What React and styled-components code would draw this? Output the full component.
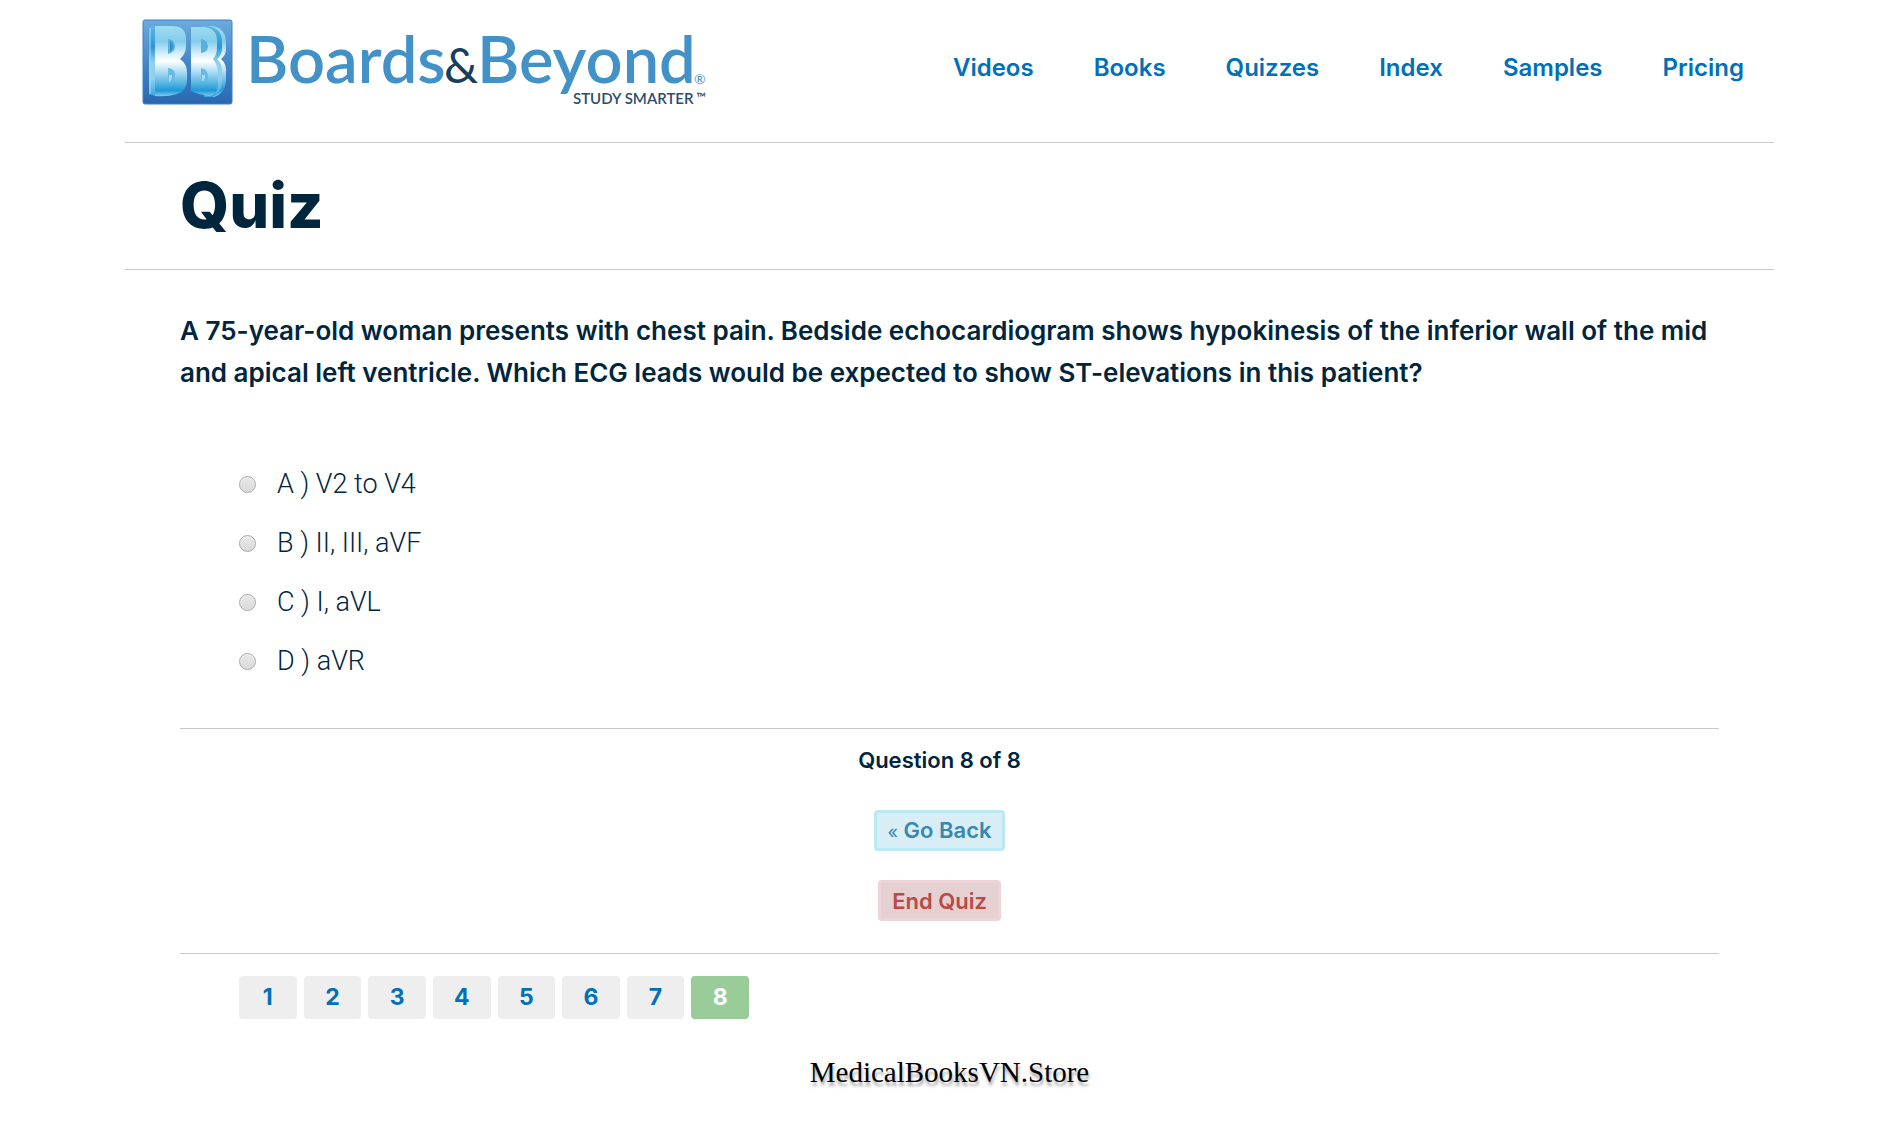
import React, { useState } from "react";
import styled, { createGlobalStyle } from "styled-components";

const navy = "#00263e";
const blue = "#0070b8";
const rule = "#c8c8c8";

const GlobalStyle = createGlobalStyle`
  *, *::before, *::after { box-sizing: border-box; }
  body {
    margin: 0;
    background: #fff;
    color: ${navy};
    font-family: Inter, "Liberation Sans", sans-serif;
  }
`;

const Page = styled.div`
  padding: 0 125px;
`;

const Header = styled.header`
  display: flex;
  justify-content: space-between;
  align-items: flex-start;
  height: 143px;
  padding: 14px 30px 0 13px;
  border-bottom: 1px solid ${rule};
`;

const LogoLink = styled.a`
  display: block;
  svg { display: block; }
`;

const Nav = styled.nav`
  display: flex;
  gap: 60px;
  padding-top: 36px;
`;

const NavLink = styled.a`
  color: ${blue};
  font-size: 24px;
  font-weight: 600;
  line-height: 36px;
  text-decoration: none;
`;

const TitleBar = styled.div`
  padding: 22px 55px 24px;
  border-bottom: 1px solid ${rule};
`;

const Title = styled.h1`
  margin: 0;
  font-size: 63px;
  font-weight: 800;
  line-height: 80px;
`;

const Content = styled.main`
  padding: 40px 55px 0;
`;

const Options = styled.fieldset`
  margin: 0;
  padding: 0 0 38px;
  border: 0;
  min-width: 0;
`;

const Question = styled.legend`
  padding: 0 0 60px;
  font-size: 26px;
  font-weight: 600;
  line-height: 42px;
`;

const Option = styled.label`
  display: flex;
  align-items: center;
  gap: 21px;
  height: 59px;
  padding-left: 59px;
  font: 350 27px Roboto, "Liberation Sans", sans-serif;
`;

const Radio = styled.input`
  appearance: none;
  width: 17px;
  height: 17px;
  margin: 2px 0 0;
  border: 1px solid #a9a9a9;
  border-radius: 50%;
  background: linear-gradient(#e8e8e8, #dadada);
  box-shadow: inset 0 1px 1px #f4f4f4;
  &:checked {
    background: radial-gradient(circle, #444 0 4px, #e0e0e0 5px);
  }
`;

const Actions = styled.section`
  display: flex;
  flex-direction: column;
  align-items: center;
  padding: 15px 20px 32px 0;
  border-top: 1px solid ${rule};
  border-bottom: 1px solid ${rule};
`;

const Progress = styled.p`
  margin: 0 0 34px;
  font-size: 22px;
  font-weight: 600;
  line-height: 32px;
`;

const tones = {
  info: ["#3a87ad", "#d9edf7", "#bce8f1"],
  danger: ["#b94a48", "#e6d1d2", "#eed3d7"],
};

const ActionButton = styled.button`
  height: 41px;
  padding: 0 11px;
  color: ${(p) => tones[p.$tone][0]};
  background: ${(p) => tones[p.$tone][1]};
  border: 3px solid ${(p) => tones[p.$tone][2]};
  border-radius: 4px;
  font: 600 22px/34px Inter, "Liberation Sans", sans-serif;
  cursor: pointer;
  & + & { margin-top: 29px; }
`;

const Chevron = styled.span`
  font-size: 18px;
  font-weight: 400;
`;

const Pagination = styled.nav`
  display: grid;
  grid-template-columns: repeat(8, 1fr);
  gap: 7px;
  width: 510px;
  margin: 22px 0 0 59px;
`;

const PageLink = styled.a`
  border-radius: 4px;
  background: ${(p) => (p.$current ? "#99cc99" : "#eeeeee")};
  color: ${(p) => (p.$current ? "#fff" : blue)};
  font-size: 23px;
  font-weight: 700;
  line-height: 43px;
  text-align: center;
  text-decoration: none;
`;

const Footer = styled.footer`
  padding: 36px 0 40px;
  color: #000;
  font: 29px/34px "Liberation Serif", serif;
  text-align: center;
  text-shadow: 1px 4px 3px rgba(0, 0, 0, 0.35);
`;

function Logo() {
  return (
    <svg width="572" height="96" viewBox="0 0 572 96" role="img" aria-label="Boards and Beyond">
      <defs>
        <linearGradient id="tile" x1="0" y1="0" x2="0" y2="1">
          <stop offset="0" stopColor="#6caadd" />
          <stop offset="0.5" stopColor="#4588c8" />
          <stop offset="1" stopColor="#2767b0" />
        </linearGradient>
        <linearGradient id="face" x1="0" y1="12" x2="0" y2="82" gradientUnits="userSpaceOnUse">
          <stop offset="0" stopColor="#9fdcf0" />
          <stop offset="0.22" stopColor="#84cdec" />
          <stop offset="0.4" stopColor="#d8f0fa" />
          <stop offset="0.5" stopColor="#ffffff" />
          <stop offset="0.64" stopColor="#b5e0f4" />
          <stop offset="0.92" stopColor="#1e9ad8" />
          <stop offset="1" stopColor="#7cc9ec" />
        </linearGradient>
        <linearGradient id="side" x1="0" y1="12" x2="0" y2="82" gradientUnits="userSpaceOnUse">
          <stop offset="0" stopColor="#5db8e6" />
          <stop offset="0.3" stopColor="#2b96d6" />
          <stop offset="0.52" stopColor="#8fd0ee" />
          <stop offset="0.75" stopColor="#8fd0ee" />
          <stop offset="1" stopColor="#3aa5dc" />
        </linearGradient>
      </defs>
      <rect x="5" y="6" width="89" height="84" rx="2" fill="url(#tile)" stroke="#3f80c4" />
      <path d="M11 14 17 12V82L11 80Z" fill="url(#side)" />
      <path d="M12 14V80" stroke="#a5dcf2" strokeWidth="1" />
      <path
        d="M17 12H34Q48 12 48 25V32Q48 40 42 45Q49 50 49 58V66Q49 77 39 80Q30 83 17 82Z"
        fill="url(#face)"
      />
      <path d="M30 25V40Q37 38 37 32Q37 26 30 25Z" fill="#56b0e0" />
      <path d="M30 54V69Q37 67 37 61Q37 55 30 54Z" fill="#68b9e4" />
      <path d="M32 27V38Q36 35 35 31Q34 28 32 27Z" fill="#3590cd" />
      <path d="M31 61V68Q34 66 34 61Z" fill="#a9dcf3" />
      <path d="M64 12H74Q88 14 88 29V35Q88 41 83 45Q89 50 88 59V67Q87 80 76 83H68Z" fill="url(#face)" />
      <path d="M64 12H70Q84 14 84 28V34Q84 41 79 45Q85 50 84 60V68Q83 79 75 83H66Z" fill="url(#side)" />
      <path
        d="M53 13H64Q79 13 79 27V33Q79 41 75 45Q80 51 80 60V69Q80 82 70 82Q62 81 53 77Z"
        fill="url(#face)"
      />
      <path d="M63 25V39Q70 38 70 32Q69 26 63 25Z" fill="#56b0e0" />
      <path d="M63 54V67Q70 71 70 62Q70 56 63 54Z" fill="#68b9e4" />
      <path d="M64 61V67Q67 67 67 61Z" fill="#a9dcf3" />
      <g fontFamily="Lato, 'Liberation Sans', sans-serif">
        <text x="108" y="69" fontSize="65" fontWeight="600" fill="#4292c8">Boards</text>
        <text x="306" y="69" fontSize="48" fontWeight="400" fill="#173e5a">&amp;</text>
        <text x="339" y="69" fontSize="65" fontWeight="600" fill="#4292c8">Beyond</text>
        <text x="556" y="70" fontSize="14" fill="#4292c8">®</text>
        <text x="435" y="90" fontSize="15" fontWeight="600" fill="#2a4d68">STUDY SMARTER</text>
        <text x="558" y="88" fontSize="13" fontWeight="600" fill="#2a4d68">™</text>
      </g>
    </svg>
  );
}

const links = ["Videos", "Books", "Quizzes", "Index", "Samples", "Pricing"];
const answers = ["A ) V2 to V4", "B ) II, III, aVF", "C ) I, aVL", "D ) aVR"];
const pages = [1, 2, 3, 4, 5, 6, 7, 8];

export default function App() {
  const [answer, setAnswer] = useState(null);
  return (
    <>
      <GlobalStyle />
      <Page>
        <Header>
          <LogoLink href="#home"><Logo /></LogoLink>
          <Nav>
            {links.map((name) => (
              <NavLink key={name} href={`#${name.toLowerCase()}`}>{name}</NavLink>
            ))}
          </Nav>
        </Header>
        <TitleBar>
          <Title>Quiz</Title>
        </TitleBar>
        <Content>
          <Options>
            <Question>
              A 75-year-old woman presents with chest pain. Bedside echocardiogram shows hypokinesis of
              the inferior wall of the mid and apical left ventricle. Which ECG leads would be expected
              to show ST-elevations in this patient?
            </Question>
            {answers.map((text) => (
              <Option key={text}>
                <Radio type="radio" name="answer" checked={answer === text} onChange={() => setAnswer(text)} />
                {text}
              </Option>
            ))}
          </Options>
          <Actions>
            <Progress>Question 8 of 8</Progress>
            <ActionButton type="button" $tone="info"><Chevron>«</Chevron> Go Back</ActionButton>
            <ActionButton type="button" $tone="danger">End Quiz</ActionButton>
          </Actions>
          <Pagination>
            {pages.map((n) => (
              <PageLink key={n} href={`#question-${n}`} $current={n === 8}>{n}</PageLink>
            ))}
          </Pagination>
        </Content>
        <Footer>MedicalBooksVN.Store</Footer>
      </Page>
    </>
  );
}
